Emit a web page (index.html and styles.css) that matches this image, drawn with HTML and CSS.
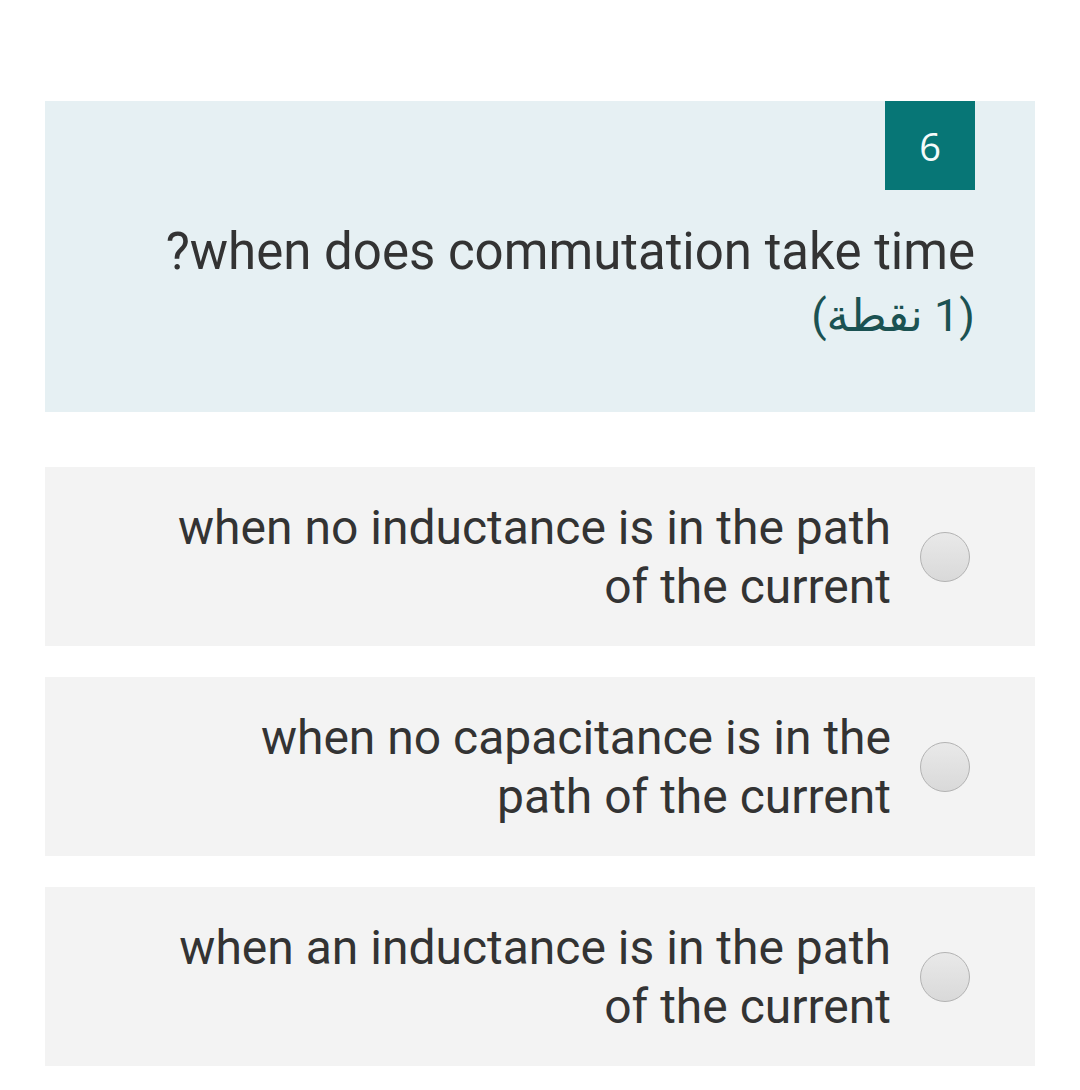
FILE: index.html
```html
<!DOCTYPE html>
<html lang="ar" dir="rtl">
<head>
<meta charset="utf-8">
<link rel="stylesheet" href="styles.css">
</head>
<body>
<main class="page">
  <section class="question">
    <div class="badge">6</div>
    <div class="q-text">when does commutation take time?</div>
    <div class="q-points">(1 نقطة)</div>
  </section>
  <div class="options">
    <label class="option">
      <span class="radio"></span>
      <span class="opt-text">when no inductance is in the path of the current</span>
    </label>
    <label class="option">
      <span class="radio"></span>
      <span class="opt-text">when no capacitance is in the path of the current</span>
    </label>
    <label class="option">
      <span class="radio"></span>
      <span class="opt-text">when an inductance is in the path of the current</span>
    </label>
  </div>
</main>
</body>
</html>
```
FILE: styles.css
```css
html, body {
  margin: 0;
  padding: 0;
  background: #ffffff;
}
body {
  font-family: Roboto, "Noto Sans", "Liberation Sans", sans-serif;
  color: #333333;
}
.page {
  padding: 101px 45px 0 45px;
}
.question {
  background: #e6f0f3;
  height: 311px;
  box-sizing: border-box;
  padding: 0 60px 0 60px;
  display: flex;
  flex-direction: column;
  align-items: flex-start;
}
.badge {
  width: 90px;
  height: 89px;
  background: #077676;
  color: #f4fbfb;
  font-family: "Open Sans", "Noto Sans", sans-serif;
  font-size: 38px;
  display: flex;
  align-items: center;
  justify-content: center;
}
.q-text {
  margin-top: 29px;
  font-size: 51px;
  line-height: 66px;
  color: #333333;
}
.q-points {
  font-family: Roboto, "DejaVu Sans", sans-serif;
  font-size: 45px;
  line-height: 62px;
  color: #1b5252;
}
.options {
  margin-top: 55px;
  display: flex;
  flex-direction: column;
  gap: 31px;
}
.option {
  background: #f3f3f3;
  height: 179px;
  box-sizing: border-box;
  padding: 0 65px 0 120px;
  display: flex;
  align-items: center;
  gap: 29px;
}
.radio {
  flex: none;
  width: 50px;
  height: 50px;
  border-radius: 50%;
  border: 1px solid #b2b2b2;
  background: linear-gradient(#e9e9e9, #d9d9d9);
  box-sizing: border-box;
}
.opt-text {
  font-size: 48px;
  line-height: 59px;
  color: #333333;
}
```
